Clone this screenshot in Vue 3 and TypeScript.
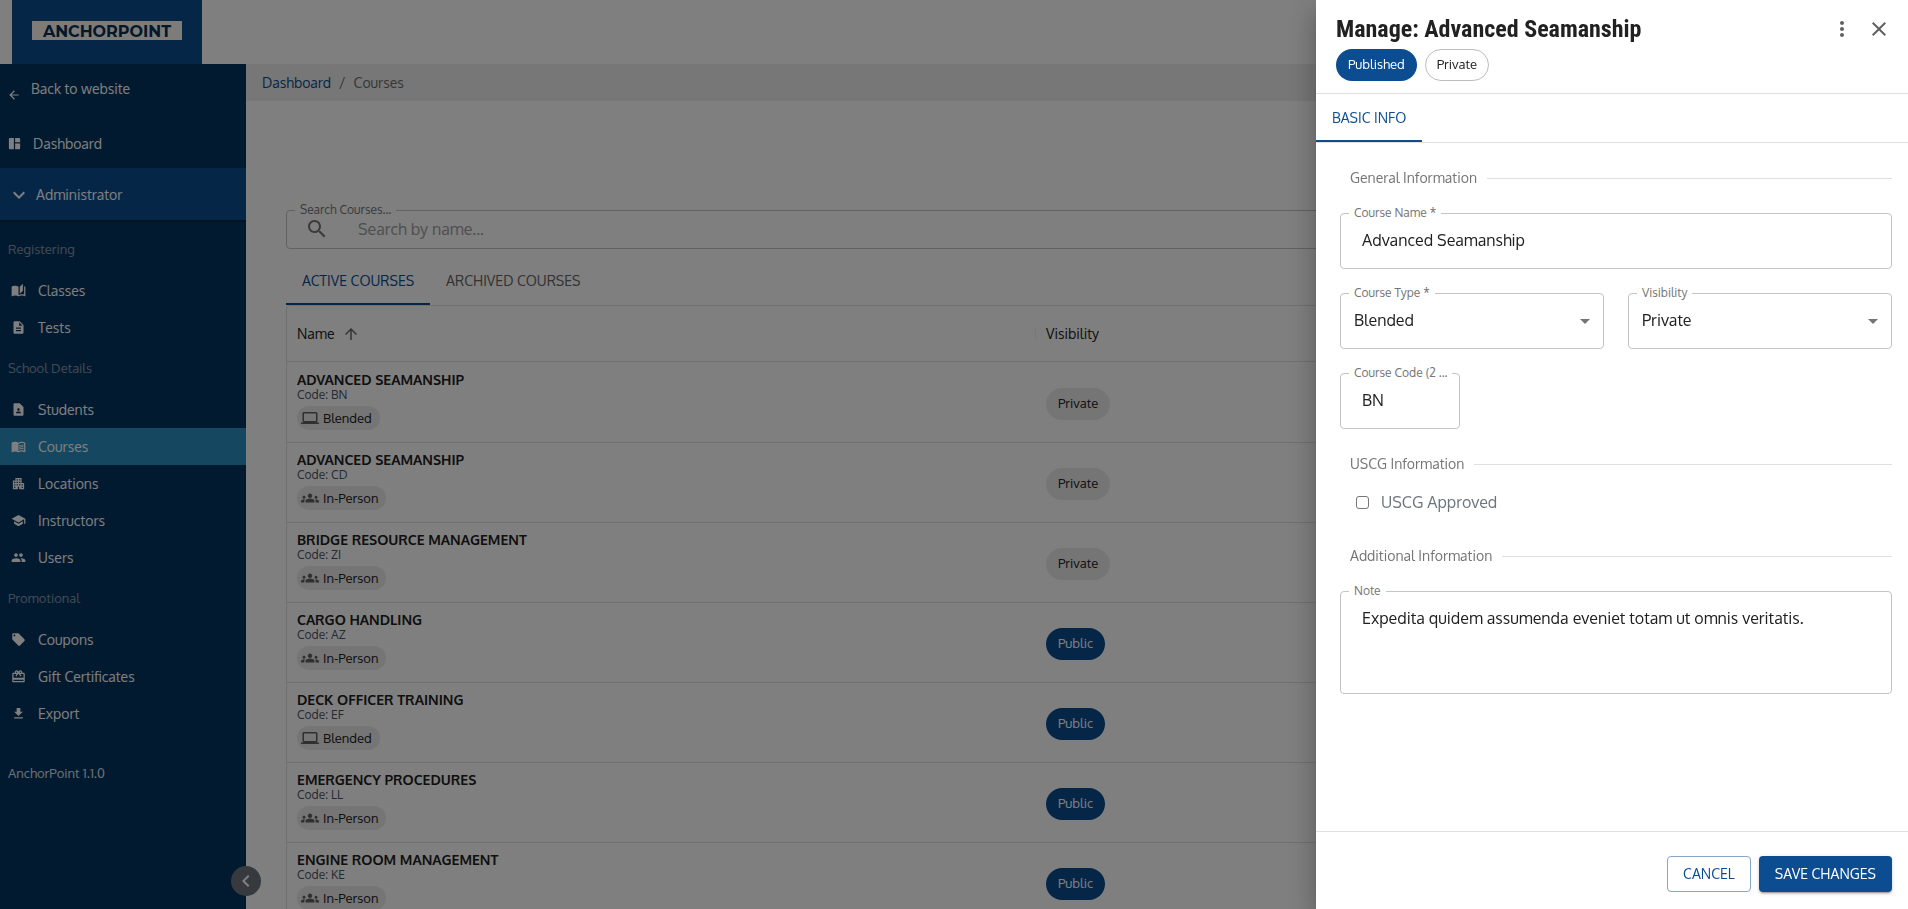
<script setup lang="ts">
import { ref } from 'vue'

interface NavItem {
  label: string
  icon: string
  active?: boolean
}
interface NavGroup {
  title: string
  items: NavItem[]
}
interface Course {
  name: string
  code: string
  type: 'Blended' | 'In-Person'
  visibility: 'Private' | 'Public'
}

const icons = {
  back: 'M20 11H7.83l5.59-5.59L12 4l-8 8 8 8 1.41-1.41L7.83 13H20v-2z',
  dashboard: 'M11 21H5c-1.1 0-2-.9-2-2V5c0-1.1.9-2 2-2h6v18zm2 0h6c1.1 0 2-.9 2-2v-7h-8v9zm8-11V5c0-1.1-.9-2-2-2h-6v7h8z',
  expand: 'M16.59 8.59L12 13.17 7.41 8.59 6 10l6 6 6-6z',
  classes: 'M19 1l-5 5v11l5-4.5V1zM1 6v14.65c0 .25.25.5.5.5.1 0 .15-.05.25-.05C3.1 20.45 5.05 20 6.5 20c1.95 0 4.05.4 5.5 1.5V6c-1.45-1.1-3.55-1.5-5.5-1.5S2.45 4.9 1 6zm22 13.5V6c-.6-.45-1.25-.75-2-1v13.5c-1.1-.35-2.3-.5-3.5-.5-1.7 0-4.15.65-5.5 1.5v2c1.35-.85 3.8-1.5 5.5-1.5 1.65 0 3.35.3 4.75 1.05.1.05.15.05.25.05.25 0 .5-.25.5-.5v-1.1z',
  tests: 'M14 2H6c-1.1 0-1.99.9-1.99 2L4 20c0 1.1.89 2 1.99 2H18c1.1 0 2-.9 2-2V8l-6-6zm2 16H8v-2h8v2zm0-4H8v-2h8v2zm-3-5V3.5L18.5 9H13z',
  students: 'M14 2H6c-1.1 0-2 .9-2 2v16c0 1.1.9 2 2 2h12c1.1 0 2-.9 2-2V8l-6-6zm-2 8c1.1 0 2 .9 2 2s-.9 2-2 2-2-.9-2-2 .9-2 2-2zm4 8H8v-.57c0-.81.48-1.53 1.22-1.85.85-.37 1.79-.58 2.78-.58s1.93.21 2.78.58c.74.32 1.22 1.04 1.22 1.85V18z',
  courses: 'M21 5c-1.11-.35-2.33-.5-3.5-.5-1.95 0-4.05.4-5.5 1.5-1.45-1.1-3.55-1.5-5.5-1.5S2.45 4.9 1 6v14.65c0 .25.25.5.5.5.1 0 .15-.05.25-.05C3.1 20.45 5.05 20 6.5 20c1.95 0 4.05.4 5.5 1.5 1.35-.85 3.8-1.5 5.5-1.5 1.65 0 3.35.3 4.75 1.05.1.05.15.05.25.05.25 0 .5-.25.5-.5V6c-.6-.45-1.25-.75-2-1zm0 13.5c-1.1-.35-2.3-.5-3.5-.5-1.7 0-4.15.65-5.5 1.5V8c1.35-.85 3.8-1.5 5.5-1.5 1.2 0 2.4.15 3.5.5v11.5zM17.5 10.5c.88 0 1.73.09 2.5.26V9.24c-.79-.15-1.64-.24-2.5-.24-1.7 0-3.24.29-4.5.83v1.66c1.13-.64 2.7-.99 4.5-.99zM13 12.49v1.66c1.13-.64 2.7-.99 4.5-.99.88 0 1.73.09 2.5.26V11.9c-.79-.15-1.64-.24-2.5-.24-1.7 0-3.24.3-4.5.83zM17.5 14.33c-1.7 0-3.24.29-4.5.83v1.66c1.13-.64 2.7-.99 4.5-.99.88 0 1.73.09 2.5.26v-1.52c-.79-.16-1.64-.24-2.5-.24z',
  locations: 'M17 11V3H7v4H3v14h8v-4h2v4h8V11h-4zM7 19H5v-2h2v2zm0-4H5v-2h2v2zm0-4H5V9h2v2zm4 4H9v-2h2v2zm0-4H9V9h2v2zm0-4H9V5h2v2zm4 8h-2v-2h2v2zm0-4h-2V9h2v2zm0-4h-2V5h2v2zm4 12h-2v-2h2v2zm0-4h-2v-2h2v2z',
  instructors: 'M5 13.18v4L12 21l7-3.82v-4L12 17l-7-3.82zM12 3L1 9l11 6 9-4.91V17h2V9L12 3z',
  users: 'M16 11c1.66 0 2.99-1.34 2.99-3S17.66 5 16 5c-1.66 0-3 1.34-3 3s1.34 3 3 3zm-8 0c1.66 0 2.99-1.34 2.99-3S9.66 5 8 5C6.34 5 5 6.34 5 8s1.34 3 3 3zm0 2c-2.33 0-7 1.17-7 3.5V19h14v-2.5c0-2.33-4.67-3.5-7-3.5zm8 0c-.29 0-.62.02-.97.05 1.16.84 1.97 1.97 1.97 3.45V19h6v-2.5c0-2.33-4.67-3.5-7-3.5z',
  coupons: 'M21.41 11.58l-9-9C12.05 2.22 11.55 2 11 2H4c-1.1 0-2 .9-2 2v7c0 .55.22 1.05.59 1.42l9 9c.36.36.86.58 1.41.58.55 0 1.05-.22 1.41-.59l7-7c.37-.36.59-.86.59-1.41 0-.55-.23-1.06-.59-1.42zM5.5 7C4.67 7 4 6.33 4 5.5S4.67 4 5.5 4 7 4.67 7 5.5 6.33 7 5.5 7z',
  gift: 'M20 6h-2.18c.11-.31.18-.65.18-1 0-1.66-1.34-3-3-3-1.05 0-1.96.54-2.5 1.35l-.5.67-.5-.68C10.96 2.54 10.05 2 9 2 7.34 2 6 3.34 6 5c0 .35.07.69.18 1H4c-1.11 0-1.99.89-1.99 2L2 19c0 1.11.89 2 2 2h16c1.11 0 2-.89 2-2V8c0-1.11-.89-2-2-2zm-5-2c.55 0 1 .45 1 1s-.45 1-1 1-1-.45-1-1 .45-1 1-1zM9 4c.55 0 1 .45 1 1s-.45 1-1 1-1-.45-1-1 .45-1 1-1zm11 15H4v-2h16v2zm0-5H4V8h5.08L7 10.83 8.62 12 11 8.76l1-1.36 1 1.36L15.38 12 17 10.83 14.92 8H20v6z',
  download: 'M5 20h14v-2H5v2zM19 9h-4V3H9v6H5l7 7 7-7z',
  search: 'M15.5 14h-.79l-.28-.27C15.41 12.59 16 11.11 16 9.5 16 5.91 13.09 3 9.5 3S3 5.91 3 9.5 5.91 16 9.5 16c1.61 0 3.09-.59 4.23-1.57l.27.28v.79l5 4.99L20.49 19l-4.99-5zm-6 0C7.01 14 5 11.99 5 9.5S7.01 5 9.5 5 14 7.01 14 9.5 11.99 14 9.5 14z',
  up: 'M4 12l1.41 1.41L11 7.83V20h2V7.83l5.58 5.59L20 12l-8-8-8 8z',
  laptop: 'M20 18c1.1 0 1.99-.9 1.99-2L22 6c0-1.1-.9-2-2-2H4c-1.1 0-2 .9-2 2v10c0 1.1.9 2 2 2H0v2h24v-2h-4zM4 6h16v10H4V6z',
  groups: 'M12 12.75c1.63 0 3.07.39 4.24.9 1.08.48 1.76 1.56 1.76 2.73V18H6v-1.61c0-1.18.68-2.26 1.76-2.73 1.17-.52 2.61-.91 4.24-.91zM4 13c1.1 0 2-.9 2-2s-.9-2-2-2-2 .9-2 2 .9 2 2 2zm1.13 1.1c-.37-.06-.74-.1-1.13-.1-.99 0-1.93.21-2.78.58C.48 14.9 0 15.62 0 16.43V18h4.5v-1.61c0-.83.23-1.61.63-2.29zM20 13c1.1 0 2-.9 2-2s-.9-2-2-2-2 .9-2 2 .9 2 2 2zm4 3.43c0-.81-.48-1.53-1.22-1.85-.85-.37-1.79-.58-2.78-.58-.39 0-.76.04-1.13.1.4.68.63 1.46.63 2.29V18H24v-1.57zM12 6c1.66 0 3 1.34 3 3s-1.34 3-3 3-3-1.34-3-3 1.34-3 3-3z',
  left: 'M15.41 7.41L14 6l-6 6 6 6 1.41-1.41L10.83 12z',
  more: 'M12 8c1.1 0 2-.9 2-2s-.9-2-2-2-2 .9-2 2 .9 2 2 2zm0 2c-1.1 0-2 .9-2 2s.9 2 2 2 2-.9 2-2-.9-2-2-2zm0 6c-1.1 0-2 .9-2 2s.9 2 2 2 2-.9 2-2-.9-2-2-2z',
  close: 'M19 6.41L17.59 5 12 10.59 6.41 5 5 6.41 10.59 12 5 17.59 6.41 19 12 13.41 17.59 19 19 17.59 13.41 12z',
}

const groups: NavGroup[] = [
  {
    title: 'Registering',
    items: [
      { label: 'Classes', icon: icons.classes },
      { label: 'Tests', icon: icons.tests },
    ],
  },
  {
    title: 'School Details',
    items: [
      { label: 'Students', icon: icons.students },
      { label: 'Courses', icon: icons.courses, active: true },
      { label: 'Locations', icon: icons.locations },
      { label: 'Instructors', icon: icons.instructors },
      { label: 'Users', icon: icons.users },
    ],
  },
  {
    title: 'Promotional',
    items: [
      { label: 'Coupons', icon: icons.coupons },
      { label: 'Gift Certificates', icon: icons.gift },
      { label: 'Export', icon: icons.download },
    ],
  },
]

const courses: Course[] = [
  { name: 'ADVANCED SEAMANSHIP', code: 'BN', type: 'Blended', visibility: 'Private' },
  { name: 'ADVANCED SEAMANSHIP', code: 'CD', type: 'In-Person', visibility: 'Private' },
  { name: 'BRIDGE RESOURCE MANAGEMENT', code: 'ZI', type: 'In-Person', visibility: 'Private' },
  { name: 'CARGO HANDLING', code: 'AZ', type: 'In-Person', visibility: 'Public' },
  { name: 'DECK OFFICER TRAINING', code: 'EF', type: 'Blended', visibility: 'Public' },
  { name: 'EMERGENCY PROCEDURES', code: 'LL', type: 'In-Person', visibility: 'Public' },
  { name: 'ENGINE ROOM MANAGEMENT', code: 'KE', type: 'In-Person', visibility: 'Public' },
]

const search = ref('')
const form = ref({
  name: 'Advanced Seamanship',
  type: 'Blended',
  visibility: 'Private',
  code: 'BN',
  approved: false,
  note: 'Expedita quidem assumenda eveniet totam ut omnis veritatis.',
})
</script>

<template>
  <div class="app">
    <header class="topbar">
      <a href="#" class="brand"><span class="brand-mark">ANCHORPOINT</span></a>
    </header>

    <div class="body">
      <nav class="sidebar" aria-label="Main">
        <a href="#" class="nav-top nav-back">
          <svg class="icon-14" viewBox="0 0 24 24"><path :d="icons.back" /></svg>
          <span>Back to website</span>
        </a>
        <a href="#" class="nav-top nav-dashboard">
          <svg class="icon-15" viewBox="0 0 24 24"><path :d="icons.dashboard" /></svg>
          <span>Dashboard</span>
        </a>
        <button type="button" class="nav-role">
          <svg class="icon-24" viewBox="0 0 24 24"><path :d="icons.expand" /></svg>
          <span>Administrator</span>
        </button>

        <section v-for="group in groups" :key="group.title">
          <h2 class="nav-heading">{{ group.title }}</h2>
          <a
            v-for="item in group.items"
            :key="item.label"
            href="#"
            class="nav-item"
            :class="{ active: item.active }"
          >
            <svg class="icon-15" viewBox="0 0 24 24"><path :d="item.icon" /></svg>
            <span>{{ item.label }}</span>
          </a>
        </section>
        <p class="version">AnchorPoint 1.1.0</p>

        <button type="button" class="collapse" aria-label="Collapse menu">
          <svg class="icon-24" viewBox="0 0 24 24"><path :d="icons.left" /></svg>
        </button>
      </nav>

      <main class="main">
        <nav class="crumbs" aria-label="Breadcrumb">
          <a href="#">Dashboard</a>
          <span>/</span>
          <span>Courses</span>
        </nav>

        <div class="content">
          <div class="field search">
            <label for="search">Search Courses...</label>
            <svg class="icon-24" viewBox="0 0 24 24"><path :d="icons.search" /></svg>
            <input id="search" v-model="search" type="text" placeholder="Search by name..." />
          </div>

          <div class="tabs" role="tablist">
            <button type="button" role="tab" class="tab selected" aria-selected="true">ACTIVE COURSES</button>
            <button type="button" role="tab" class="tab" aria-selected="false">ARCHIVED COURSES</button>
          </div>

          <div class="grid">
            <table>
              <thead>
                <tr>
                  <th class="col-name" scope="col">
                    <div class="head">
                      <span>Name</span>
                      <svg class="icon-18" viewBox="0 0 24 24"><path :d="icons.up" /></svg>
                      <i class="separator"></i>
                    </div>
                  </th>
                  <th scope="col">Visibility</th>
                </tr>
              </thead>
              <tbody>
                <tr v-for="course in courses" :key="course.code">
                  <td class="cell-course">
                    <div class="course-name">{{ course.name }}</div>
                    <div class="course-code">Code: {{ course.code }}</div>
                    <span class="type-chip">
                      <svg class="icon-18" viewBox="0 0 24 24">
                        <path :d="course.type === 'Blended' ? icons.laptop : icons.groups" />
                      </svg>
                      {{ course.type }}
                    </span>
                  </td>
                  <td class="cell-visibility">
                    <span class="chip" :class="course.visibility === 'Public' ? 'primary' : 'neutral'">
                      {{ course.visibility }}
                    </span>
                  </td>
                </tr>
              </tbody>
            </table>
          </div>
        </div>
      </main>
    </div>

    <div class="backdrop">
      <aside class="drawer" role="dialog" aria-labelledby="drawer-title">
        <header class="drawer-head">
          <div class="title-row">
            <h1 id="drawer-title">Manage: Advanced Seamanship</h1>
            <button type="button" class="icon-button" aria-label="More options">
              <svg class="icon-24" viewBox="0 0 24 24"><path :d="icons.more" /></svg>
            </button>
            <button type="button" class="icon-button" aria-label="Close">
              <svg class="icon-24" viewBox="0 0 24 24"><path :d="icons.close" /></svg>
            </button>
          </div>
          <div class="chips">
            <span class="chip primary">Published</span>
            <span class="chip outlined">Private</span>
          </div>
        </header>

        <div class="tabs drawer-tabs" role="tablist">
          <button type="button" role="tab" class="tab selected" aria-selected="true">BASIC INFO</button>
        </div>

        <form id="course-form" class="form" @submit.prevent>
          <h2 class="divider">General Information</h2>
          <div class="field">
            <label for="name">Course Name *</label>
            <input id="name" v-model="form.name" type="text" />
          </div>
          <div class="pair">
            <div class="field">
              <label for="type">Course Type *</label>
              <select id="type" v-model="form.type">
                <option>Blended</option>
                <option>In-Person</option>
              </select>
            </div>
            <div class="field">
              <label for="visibility">Visibility</label>
              <select id="visibility" v-model="form.visibility">
                <option>Private</option>
                <option>Public</option>
              </select>
            </div>
          </div>
          <div class="field short">
            <label for="code">Course Code (2 ...</label>
            <input id="code" v-model="form.code" type="text" />
          </div>

          <h2 class="divider">USCG Information</h2>
          <div class="check">
            <input id="approved" v-model="form.approved" type="checkbox" />
            <label for="approved">USCG Approved</label>
          </div>

          <h2 class="divider">Additional Information</h2>
          <div class="field note">
            <label for="note">Note</label>
            <textarea id="note" v-model="form.note" rows="3"></textarea>
          </div>
        </form>

        <footer class="drawer-foot">
          <button type="button" class="action cancel">CANCEL</button>
          <button type="submit" form="course-form" class="action save">SAVE CHANGES</button>
        </footer>
      </aside>
    </div>
  </div>
</template>

<style>
body {
  margin: 0;
  background: #fff;
}
</style>

<style scoped>
.app,
.app * {
  box-sizing: border-box;
}
.app {
  height: 100vh;
  overflow: hidden;
  display: flex;
  flex-direction: column;
  font: 400 14px/20px Oxygen, 'Noto Sans', 'Open Sans', sans-serif;
  color: #212121;
}
a {
  color: inherit;
  text-decoration: none;
}
button,
input,
select,
textarea {
  font: inherit;
  color: inherit;
  border: 0;
  padding: 0;
  margin: 0;
  background: none;
}
h1,
h2,
p {
  margin: 0;
}
svg {
  fill: currentColor;
  flex: none;
  display: block;
}
.icon-14 { width: 14px; height: 14px; }
.icon-15 { width: 15px; height: 15px; }
.icon-18 { width: 18px; height: 18px; }
.icon-24 { width: 24px; height: 24px; }

/* Top bar */
.topbar {
  flex: none;
  height: 64px;
  padding-left: 12px;
  display: flex;
}
.brand {
  width: 190px;
  background: #0c4d91;
  display: flex;
  justify-content: center;
  padding-top: 21px;
}
.brand-mark {
  width: 150px;
  height: 19px;
  background: #fbf8f3;
  color: #0a2f57;
  font: 700 16px/21px Montserrat, Inter, sans-serif;
  text-align: center;
}

.body {
  flex: 1;
  min-height: 0;
  display: flex;
}

/* Sidebar */
.sidebar {
  position: relative;
  flex: none;
  width: 246px;
  background: #053460;
  color: #fff;
}
.nav-top {
  display: flex;
  align-items: center;
}
.nav-back {
  height: 55px;
  padding-left: 7px;
  gap: 10px;
  align-items: flex-start;
  padding-top: 15px;
}
.nav-back svg {
  margin-top: 9px;
}
.nav-dashboard {
  height: 49px;
  padding-left: 7px;
  gap: 11px;
}
.nav-role {
  width: 100%;
  height: 54px;
  padding: 2px 0 0 7px;
  display: flex;
  align-items: center;
  gap: 5px;
  background: #0c4d91;
  border-bottom: 2px solid #032444;
}
.nav-heading {
  height: 45px;
  padding-left: 8px;
  font-size: 13px;
  line-height: 45px;
  font-weight: 400;
  color: #8397ab;
}
.nav-role + section {
  padding-top: 5px;
}
.nav-item {
  height: 37px;
  padding-left: 11px;
  display: flex;
  align-items: center;
  gap: 12px;
}
.nav-item.active {
  background: #2c8fc0;
}
.version {
  padding: 31px 0 0 8px;
  font-size: 13px;
  color: #dbe1e8;
}
.collapse {
  position: absolute;
  right: -15px;
  bottom: 13px;
  width: 30px;
  height: 30px;
  border-radius: 50%;
  background: #6c757d;
  display: grid;
  place-items: center;
}

/* Main area */
.main {
  flex: 1;
  min-width: 0;
}
.crumbs {
  height: 37px;
  padding: 0 16px;
  display: flex;
  align-items: center;
  gap: 8px;
  background: #eee;
  color: #6d6d6d;
}
.crumbs a {
  color: #0c4d91;
}
.content {
  padding: 109px 40px 0;
}

/* Outlined fields */
.field {
  position: relative;
  border: 1px solid #c4c4c4;
  border-radius: 4px;
  display: flex;
}
.field > label {
  position: absolute;
  top: -9px;
  left: 8px;
  padding: 0 5px;
  background: #fff;
  font-size: 12px;
  line-height: 16px;
  color: #757575;
  white-space: nowrap;
}
.field input,
.field select,
.field textarea {
  flex: 1;
  min-width: 0;
  font-size: 16px;
  line-height: 24px;
  outline: 0;
}
.search {
  height: 39px;
  align-items: center;
  padding: 0 18px 2px;
  gap: 29px;
  color: #757575;
}
.search input::placeholder {
  color: #9e9e9e;
  opacity: 1;
}

/* Tabs */
.tabs {
  display: flex;
}
.content .tabs {
  margin-top: 8px;
}
.tab {
  height: 48px;
  padding: 2px 16px 0;
  border-bottom: 2px solid transparent;
  color: #666;
}
.tab.selected {
  color: #0c4d91;
  border-color: #0c4d91;
}

/* Course table */
.grid {
  border: 1px solid #e0e0e0;
  border-radius: 4px;
}
table {
  width: 100%;
  table-layout: fixed;
  border-collapse: separate;
  border-spacing: 0;
}
th,
td {
  padding: 0 10px;
  text-align: left;
  border-bottom: 1px solid #e0e0e0;
}
th {
  height: 56px;
  font-weight: 400;
}
td {
  height: 80px;
  vertical-align: bottom;
}
tbody tr:first-child td {
  height: 81px;
}
.cell-course {
  padding-bottom: 12px;
}
.cell-visibility {
  padding-bottom: 22px;
}
.col-name {
  width: 749px;
}
.head {
  display: flex;
  align-items: center;
  gap: 7px;
}
.head svg {
  color: #666;
}
.separator {
  width: 1px;
  height: 10px;
  margin-left: auto;
  margin-right: -10px;
  background: #eee;
}
.course-name {
  font-weight: 700;
  line-height: 17px;
}
.course-code {
  font-size: 12px;
  line-height: 13px;
  color: #4a5568;
}
.type-chip {
  width: max-content;
  height: 24px;
  margin-top: 5px;
  padding: 0 8px 0 4px;
  border-radius: 12px;
  display: flex;
  align-items: center;
  gap: 4px;
  background: #ebebeb;
  font-size: 13px;
}
.type-chip svg {
  color: #616161;
}
.chip {
  width: max-content;
  height: 32px;
  padding: 0 12px 2px;
  border-radius: 16px;
  display: flex;
  align-items: center;
  font-size: 13px;
}
.chip.neutral {
  background: #ebebeb;
}
.chip.primary {
  background: #0c4d91;
  color: #fff;
}
.chip.outlined {
  border: 1px solid #bdbdbd;
  padding: 0 11px 2px;
}

/* Drawer */
.backdrop {
  position: fixed;
  inset: 0;
  display: flex;
  justify-content: flex-end;
  background: rgba(0, 0, 0, 0.5);
}
.drawer {
  width: 592px;
  max-width: 100%;
  background: #fff;
  box-shadow: 0 8px 10px -5px rgba(0, 0, 0, 0.2), 0 16px 24px 2px rgba(0, 0, 0, 0.14), 0 6px 30px 5px rgba(0, 0, 0, 0.12);
  display: flex;
  flex-direction: column;
}
.drawer-head {
  padding: 9px 17px 12px 20px;
  border-bottom: 1px solid #e0e0e0;
}
.title-row {
  display: flex;
  align-items: center;
  gap: 13px;
  height: 40px;
}
h1 {
  flex: 1;
  font: 700 24px/32px 'Roboto Condensed', Roboto, sans-serif;
}
.icon-button {
  color: #616161;
}
.chips {
  display: flex;
  gap: 8px;
}
.drawer-tabs {
  border-bottom: 1px solid #e0e0e0;
}
.form {
  flex: 1;
  min-height: 0;
  padding: 25px 16px 0 24px;
}
.divider {
  display: flex;
  align-items: center;
  gap: 10px;
  padding-left: 10px;
  font-size: 14px;
  line-height: 20px;
  font-weight: 400;
  color: #757575;
}
.divider::after {
  content: '';
  flex: 1;
  height: 1px;
  background: #e0e0e0;
}
.form .field {
  height: 56px;
  margin-top: 24px;
}
.form .divider + .field {
  margin-top: 25px;
}
.form input[type='text'],
.form textarea {
  padding-left: 21px;
}
.form input[type='text'],
.form select {
  padding-bottom: 2px;
}
.form select {
  padding-left: 13px;
  padding-right: 40px;
  appearance: none;
}
.pair {
  display: grid;
  grid-template-columns: 1fr 1fr;
  gap: 24px;
}
.pair .field::after {
  content: '';
  position: absolute;
  right: 13px;
  top: 25px;
  border: 5px solid transparent;
  border-top-color: #757575;
  border-bottom: 0;
  pointer-events: none;
}
.short {
  width: 120px;
}
.short ~ .divider {
  margin-top: 25px;
}
.check {
  display: flex;
  align-items: center;
  gap: 12px;
  height: 38px;
  margin: 9px 0 0 16px;
}
.check input {
  appearance: none;
  width: 13px;
  height: 13px;
  border: 1px solid #767676;
  border-radius: 3px;
}
.check label {
  font-size: 16px;
  line-height: 24px;
  color: #6c757d;
}
.form .note {
  height: 103px;
}
.note textarea {
  resize: none;
  padding-top: 14px;
}
.drawer-foot {
  display: flex;
  justify-content: flex-end;
  gap: 8px;
  padding: 24px 16px 17px;
  border-top: 1px solid #e0e0e0;
}
.action {
  height: 36px;
  padding: 0 16px;
  border-radius: 4px;
}
.cancel {
  padding: 0 15px;
  border: 1px solid #86a6c8;
  color: #0c4d91;
}
.save {
  background: #0c4d91;
  color: #fff;
  box-shadow: 0 3px 1px -2px rgba(0, 0, 0, 0.2), 0 2px 2px rgba(0, 0, 0, 0.14), 0 1px 5px rgba(0, 0, 0, 0.12);
}
</style>
